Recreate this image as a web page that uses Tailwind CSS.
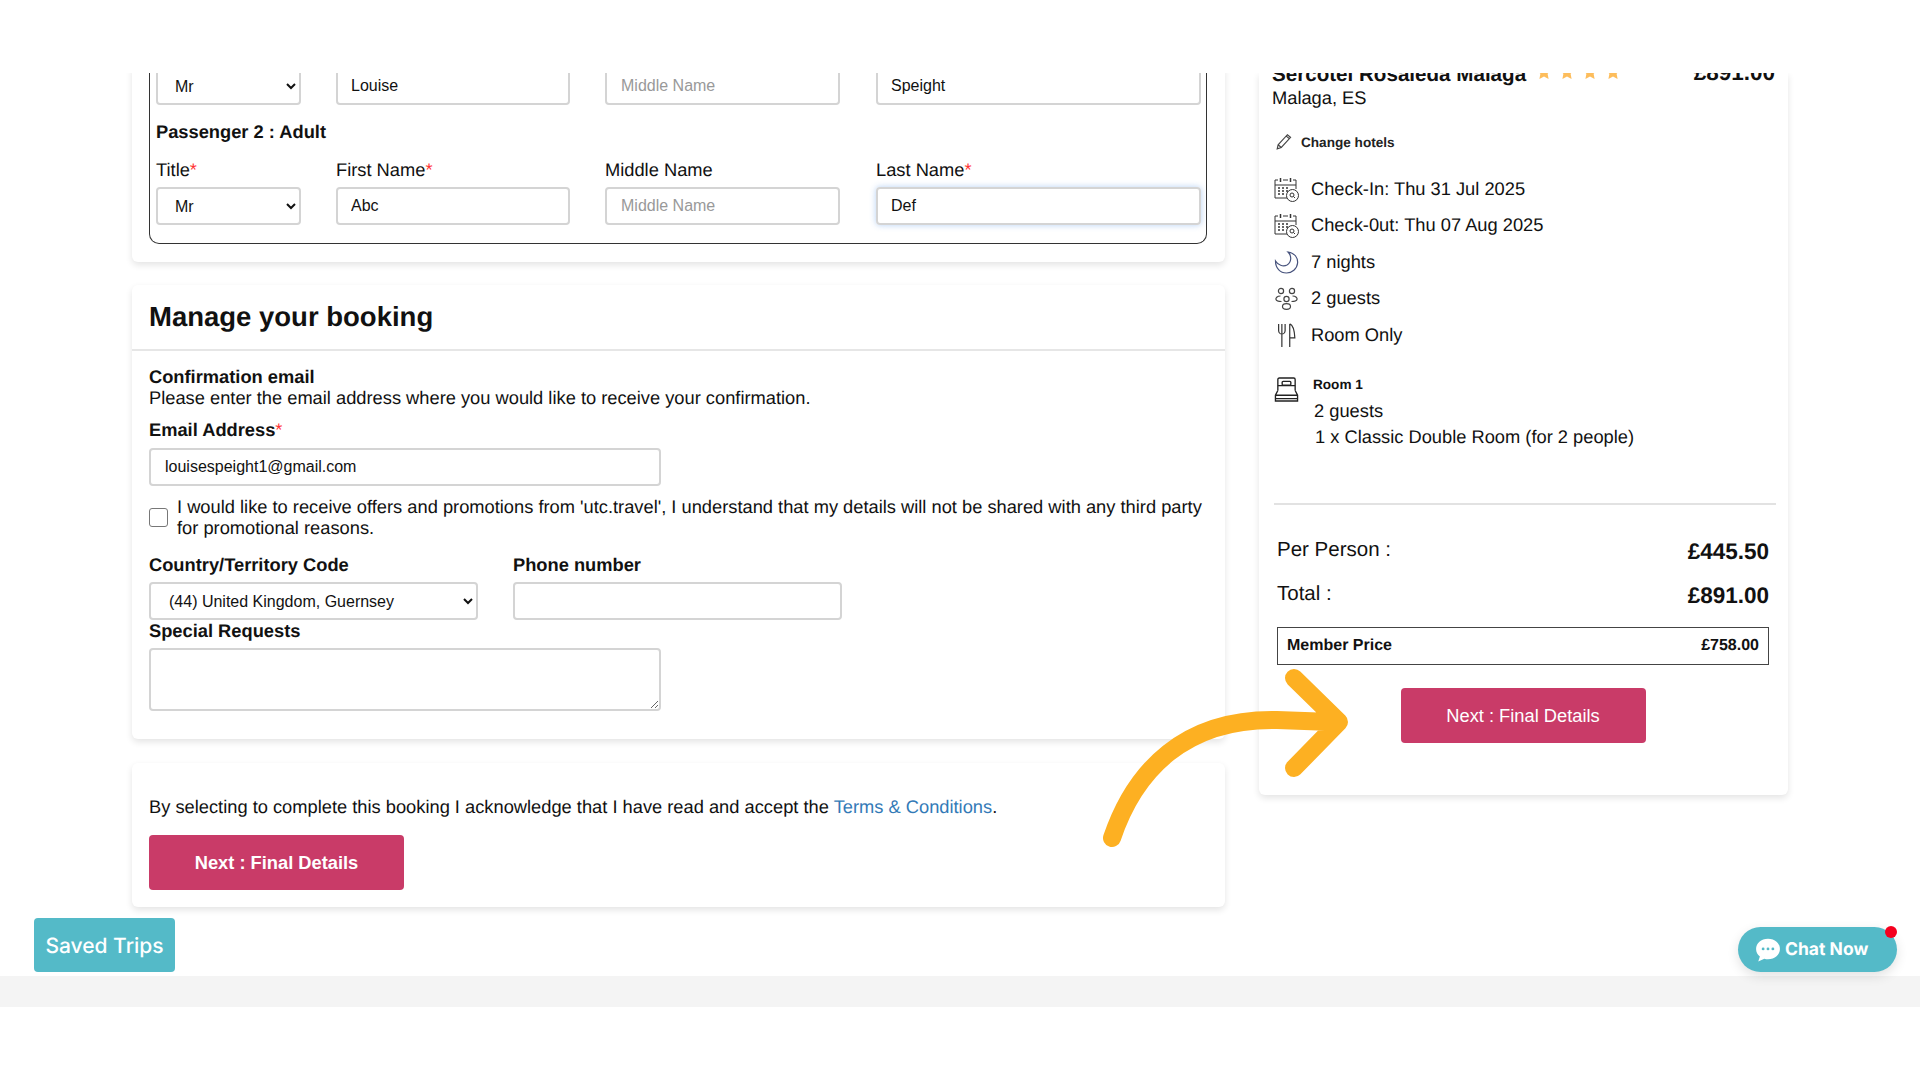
<!DOCTYPE html>
<html>
<head>
<meta charset="UTF-8">
<title>Booking</title>
<script src="https://cdn.jsdelivr.net/npm/@tailwindcss/browser@4"></script>
</head>
<body class="bg-white">
<div class="relative w-[1920px] h-[1080px] overflow-hidden bg-white text-[18.3px] leading-[21px] text-[#111] [text-rendering:geometricPrecision] font-['Liberation_Sans',Arial,sans-serif]">

  <!-- scrolled page area -->
  <div class="mt-[73px] h-[903px] overflow-hidden flex items-start pl-[132px]">

    <!-- left column -->
    <div class="w-[1093px] shrink-0">
      <div class="bg-white rounded-b-md shadow-[0_3px_7px_rgba(0,0,0,0.11)] pl-[17px] pr-[18px] pb-[18px]">
        <div class="border-x border-b border-[#333] rounded-b-[10px] pl-[6px] pb-[18px]">
          <div class="flex -mt-[6px]">
            <select class="w-[145px] h-[38px] border-2 border-[#d4d4d4] rounded pl-[13px] text-[16px] bg-white"><option>Mr</option></select>
            <input class="ml-[35px] w-[234px] h-[38px] border-2 border-[#d4d4d4] rounded pl-[13px] text-[16px]" value="Louise">
            <input class="ml-[35px] w-[235px] h-[38px] border-2 border-[#d4d4d4] rounded pl-[14px] text-[16px] placeholder:text-[#999]" placeholder="Middle Name">
            <input class="ml-[36px] w-[325px] h-[38px] border-2 border-[#d4d4d4] rounded pl-[13px] text-[16px]" value="Speight">
          </div>
          <div class="mt-[15px] font-bold leading-[24px]">Passenger 2 : Adult</div>
          <div class="flex mt-[14px] leading-[24px]">
            <div class="w-[145px]">Title<span class="text-[#f33]">*</span></div>
            <div class="ml-[35px] w-[234px]">First Name<span class="text-[#f33]">*</span></div>
            <div class="ml-[35px] w-[235px]">Middle Name</div>
            <div class="ml-[36px] w-[325px]">Last Name<span class="text-[#f33]">*</span></div>
          </div>
          <div class="flex mt-[5px]">
            <select class="w-[145px] h-[38px] border-2 border-[#d4d4d4] rounded pl-[13px] text-[16px] bg-white"><option>Mr</option></select>
            <input class="ml-[35px] w-[234px] h-[38px] border-2 border-[#d4d4d4] rounded pl-[13px] text-[16px]" value="Abc">
            <input class="ml-[35px] w-[235px] h-[38px] border-2 border-[#d4d4d4] rounded pl-[14px] text-[16px] placeholder:text-[#999]" placeholder="Middle Name">
            <input class="ml-[36px] w-[325px] h-[38px] border-2 border-[#d4d4d4] rounded pl-[13px] text-[16px] shadow-[0_0_6px_rgba(90,150,230,0.45)]" value="Def">
          </div>
        </div>
      </div>

      <div class="mt-[23px] bg-white rounded-md shadow-[0_3px_7px_rgba(0,0,0,0.11)] pb-[28px]">
        <h2 class="h-[64px] flex items-center px-[17px] pb-[2px] text-[27.5px] font-bold">Manage your booking</h2>
        <div class="h-[2px] bg-[#e6e6e6]"></div>
        <div class="px-[17px] pt-[15px]">
          <div class="font-bold">Confirmation email</div>
          <div>Please enter the email address where you would like to receive your confirmation.</div>
          <div class="mt-[11px] font-bold">Email Address<span class="text-[#f33] font-normal">*</span></div>
          <input class="mt-[8px] block w-[512px] h-[38px] border-2 border-[#d4d4d4] rounded pl-[14px] text-[16px]" value="louisespeight1@gmail.com">
          <div class="mt-[10px] flex items-center gap-[9px]">
            <input type="checkbox" class="w-[19px] h-[19px] appearance-none border border-[#777] rounded-[3px] bg-white shrink-0">
            <div class="w-[1035px]">I would like to receive offers and promotions from 'utc.travel', I understand that my details will not be shared with any third party for promotional reasons.</div>
          </div>
          <div class="mt-[16px] flex gap-[35px]">
            <div class="w-[329px]">
              <div class="font-bold">Country/Territory Code</div>
              <select class="mt-[7px] block w-[329px] h-[38px] border-2 border-[#d4d4d4] rounded pl-[14px] text-[16px] bg-white"><option>(44) United Kingdom, Guernsey</option></select>
            </div>
            <div class="w-[329px]">
              <div class="font-bold">Phone number</div>
              <input class="mt-[7px] block w-[329px] h-[38px] border-2 border-[#d4d4d4] rounded">
            </div>
          </div>
          <div class="font-bold">Special Requests</div>
          <textarea class="mt-[7px] block w-[512px] h-[63px] border-2 border-[#d4d4d4] rounded"></textarea>
        </div>
      </div>

      <div class="mt-[24px] bg-white rounded-md shadow-[0_3px_7px_rgba(0,0,0,0.11)] px-[17px] pt-[33px] pb-[17px]">
        <div>By selecting to complete this booking I acknowledge that I have read and accept the <a class="text-[#337ab7]">Terms &amp; Conditions</a>.</div>
        <button class="mt-[18px] block w-[255px] h-[55px] rounded bg-[#c93b68] text-white font-bold">Next : Final Details</button>
      </div>
    </div>

    <!-- right column -->
    <div class="ml-[34px] w-[529px] shrink-0 bg-white rounded-b-md shadow-[0_3px_7px_rgba(0,0,0,0.11)] pb-[52px]">
      <div class="-mt-[10px] pl-[13px] pr-[13px] flex items-start">
        <div class="text-[20.6px] font-bold leading-[24px]">Sercotel Rosaleda Malaga</div>
        <div class="ml-[10px] mt-[1px] flex gap-[7px] text-[#fdbd5c]">
          <svg width="16" height="16" viewBox="0 0 24 24" fill="currentColor"><path d="M12 1l3.4 7.2 7.6 1-5.6 5.4 1.5 7.9-6.9-3.9-6.9 3.9 1.5-7.9L1 9.2l7.6-1z"/></svg>
          <svg width="16" height="16" viewBox="0 0 24 24" fill="currentColor"><path d="M12 1l3.4 7.2 7.6 1-5.6 5.4 1.5 7.9-6.9-3.9-6.9 3.9 1.5-7.9L1 9.2l7.6-1z"/></svg>
          <svg width="16" height="16" viewBox="0 0 24 24" fill="currentColor"><path d="M12 1l3.4 7.2 7.6 1-5.6 5.4 1.5 7.9-6.9-3.9-6.9 3.9 1.5-7.9L1 9.2l7.6-1z"/></svg>
          <svg width="16" height="16" viewBox="0 0 24 24" fill="currentColor"><path d="M12 1l3.4 7.2 7.6 1-5.6 5.4 1.5 7.9-6.9-3.9-6.9 3.9 1.5-7.9L1 9.2l7.6-1z"/></svg>
        </div>
        <div class="ml-auto -mt-[2px] text-[22.5px] font-bold leading-[24px]">£891.00</div>
      </div>
      <div class="pl-[13px]">Malaga, ES</div>

      <div class="mt-[27px] pl-[17px] flex items-center gap-[9px] text-[13.6px] font-bold leading-[16px] text-[#222]">
        <svg width="16" height="17" viewBox="0 0 14 15" fill="none" stroke="#444" stroke-width="1" class="-mt-[3px]"><path d="M1 14l.8-3.6L10 1.5l2.8 2.4-8.2 8.9zM9 2.700l2.800 2.400M1.800 10.400l2.800 2.400"/></svg>
        <span>Change hotels</span>
      </div>

      <div class="mt-[19px] pl-[15px]">
        <div class="h-[36.5px] flex items-center gap-[12px]">
          <svg width="25" height="25" viewBox="0 0 25 25" fill="none" stroke="#333" stroke-width="1" class="shrink-0 mt-[2px]"><path d="M4 3H1v18h12M9 3h5M19 3h3v9M1 8h21"/><path d="M6.500 1v4M16.500 1v4" stroke-width="1.500"/><path d="M4 11h2M8 11h2M12 11h2M4 14h2M8 14h2M12 14h2M4 17h2M8 17h2" stroke-width="1.500"/><circle cx="18.500" cy="18.500" r="6"/><circle cx="18" cy="18" r="2"/><path d="M19.500 19.500l1.500 1.500"/></svg>
          <span>Check-In: Thu 31 Jul 2025</span>
        </div>
        <div class="h-[36.5px] flex items-center gap-[12px]">
          <svg width="25" height="25" viewBox="0 0 25 25" fill="none" stroke="#333" stroke-width="1" class="shrink-0 mt-[2px]"><path d="M4 3H1v18h12M9 3h5M19 3h3v9M1 8h21"/><path d="M6.500 1v4M16.500 1v4" stroke-width="1.500"/><path d="M4 11h2M8 11h2M12 11h2M4 14h2M8 14h2M12 14h2M4 17h2M8 17h2" stroke-width="1.500"/><circle cx="18.500" cy="18.500" r="6"/><circle cx="18" cy="18" r="2"/><path d="M19.500 19.500l1.500 1.500"/></svg>
          <span>Check-0ut: Thu 07 Aug 2025</span>
        </div>
        <div class="h-[36.5px] flex items-center gap-[12px]">
          <svg width="25" height="25" viewBox="0 0 25 25" fill="none" stroke="#46527c" stroke-width="1.200" class="shrink-0 mt-[2px]"><path d="M14 2C21 3 24 8 23.600 13 23 19 18 23 12.500 23 6 23 1.500 18 1.500 11 4 15 9 17 13 15 17.500 12.500 18 6 14 2z"/></svg>
          <span>7 nights</span>
        </div>
        <div class="h-[36.5px] flex items-center gap-[12px]">
          <svg width="25" height="25" viewBox="0 0 25 25" fill="none" stroke="#444" stroke-width="1.200" class="shrink-0 mt-[2px]"><circle cx="7" cy="5" r="2.600"/><circle cx="18" cy="5" r="2.600"/><circle cx="12.500" cy="13" r="2.600"/><ellipse cx="12.500" cy="20.500" rx="4" ry="2.800"/><path d="M6.500 10C3 10 1.500 12 2 13.500S5 15.500 7.500 15.500M18.500 10C22 10 23.500 12 23 13.500S20 15.500 17.500 15.500"/></svg>
          <span>2 guests</span>
        </div>
        <div class="h-[36.500px] flex items-center gap-[12px]">
          <svg width="25" height="25" viewBox="0 0 25 27" fill="none" stroke="#333" stroke-width="1.300" class="shrink-0 mt-[2px]"><path d="M4 1v7c0 2.500 2 4 3.500 4S11 10.500 11 8V1M7.500 1v25M16 1v25M16 1c3 1 5 6 5.500 15H16"/></svg>
          <span>Room Only</span>
        </div>
      </div>

      <div class="mt-[24px] pl-[15px] flex items-start gap-[14px]">
        <svg width="25" height="25" viewBox="0 0 25 26" fill="none" stroke="#222" stroke-width="1.400" class="shrink-0"><path d="M3.500 14V2.500C3.500 1.500 4.500 1 5 1h15c.500 0 1.500.500 1.500 1.500V14"/><rect x="8" y="4.500" width="9" height="4" rx="1"/><path d="M3.500 9h18M3.500 14 1 19v6h23v-6l-2.500-5M1 19h23M1 22.500h23" /></svg>
        <div class="text-[13.6px] font-bold leading-[16px]">Room 1</div>
      </div>
      <div class="-mt-[4px] pl-[55px] leading-[26px]">
        <div>2 guests</div>
        <div class="ml-px">1 x Classic Double Room (for 2 people)</div>
      </div>

      <div class="mt-[53px] ml-[15px] w-[502px] h-[2px] bg-[#e2e2e2]"></div>

      <div class="ml-[18px] w-[492px]">
        <div class="mt-[33px] flex justify-between items-start leading-[24px]">
          <div class="text-[20.500px]">Per Person :</div>
          <div class="mt-[2px] text-[22.500px] font-bold">£445.50</div>
        </div>
        <div class="mt-[18px] flex justify-between items-start leading-[24px]">
          <div class="text-[20.500px]">Total :</div>
          <div class="mt-[2px] text-[22.500px] font-bold">£891.00</div>
        </div>
        <div class="mt-[19px] h-[38px] border-[1.5px] border-[#444] flex items-center justify-between pl-[9px] pr-[9px] text-[16px]">
          <span class="font-bold">Member Price</span>
          <span class="font-bold">£758.00</span>
        </div>
        <button class="mt-[23px] mx-auto block w-[245px] h-[55px] rounded bg-[#c93b68] text-white font-medium">Next : Final Details</button>
      </div>
    </div>
  </div>

  <!-- footer strip -->
  <div class="h-[31px] bg-[#f4f4f4]"></div>

  <!-- annotation arrow drawn over the page -->
  <svg class="absolute left-0 top-0 pointer-events-none" width="1920" height="1080" fill="none" stroke="#fdb022" stroke-width="18" stroke-linecap="round" stroke-linejoin="round"><path d="M1112 838C1135 770 1185 718 1277 720L1332 722M1294 678L1339 722 1294 768"/></svg>

  <!-- floating buttons -->
  <div class="absolute left-[34px] top-[918px] w-[141px] h-[54px] rounded bg-[#54bac8] text-white flex items-center justify-center pt-[2px] text-[21px] font-medium font-['Inter',sans-serif]">Saved Trips</div>

  <div class="absolute left-[1738px] top-[927px] w-[159px] h-[45px] rounded-full bg-[#54bac8] shadow-[0_4px_12px_rgba(0,0,0,0.12)] text-white flex items-center pl-[17px] gap-[4px] text-[17.500px] font-bold font-['Inter',sans-serif]">
    <svg width="26" height="26" viewBox="0 0 24 24" fill="#fff"><path d="M12 1.500C5.600 1.500 1 5.600 1 11c0 2.900 1.300 5.300 3.500 7L3 22.500 8.600 20c1.100.300 2.200.500 3.400.500 6.400 0 11-4.100 11-9.500S18.400 1.500 12 1.500z"/><circle cx="7.500" cy="11" r="1.300" fill="#54bac8"/><circle cx="12" cy="11" r="1.300" fill="#54bac8"/><circle cx="16.500" cy="11" r="1.300" fill="#54bac8"/></svg>
    <span>Chat Now</span>
  </div>
  <div class="absolute left-[1885px] top-[926px] w-[12px] h-[12px] rounded-full bg-[#f5001e]"></div>
</div>
</body>
</html>
